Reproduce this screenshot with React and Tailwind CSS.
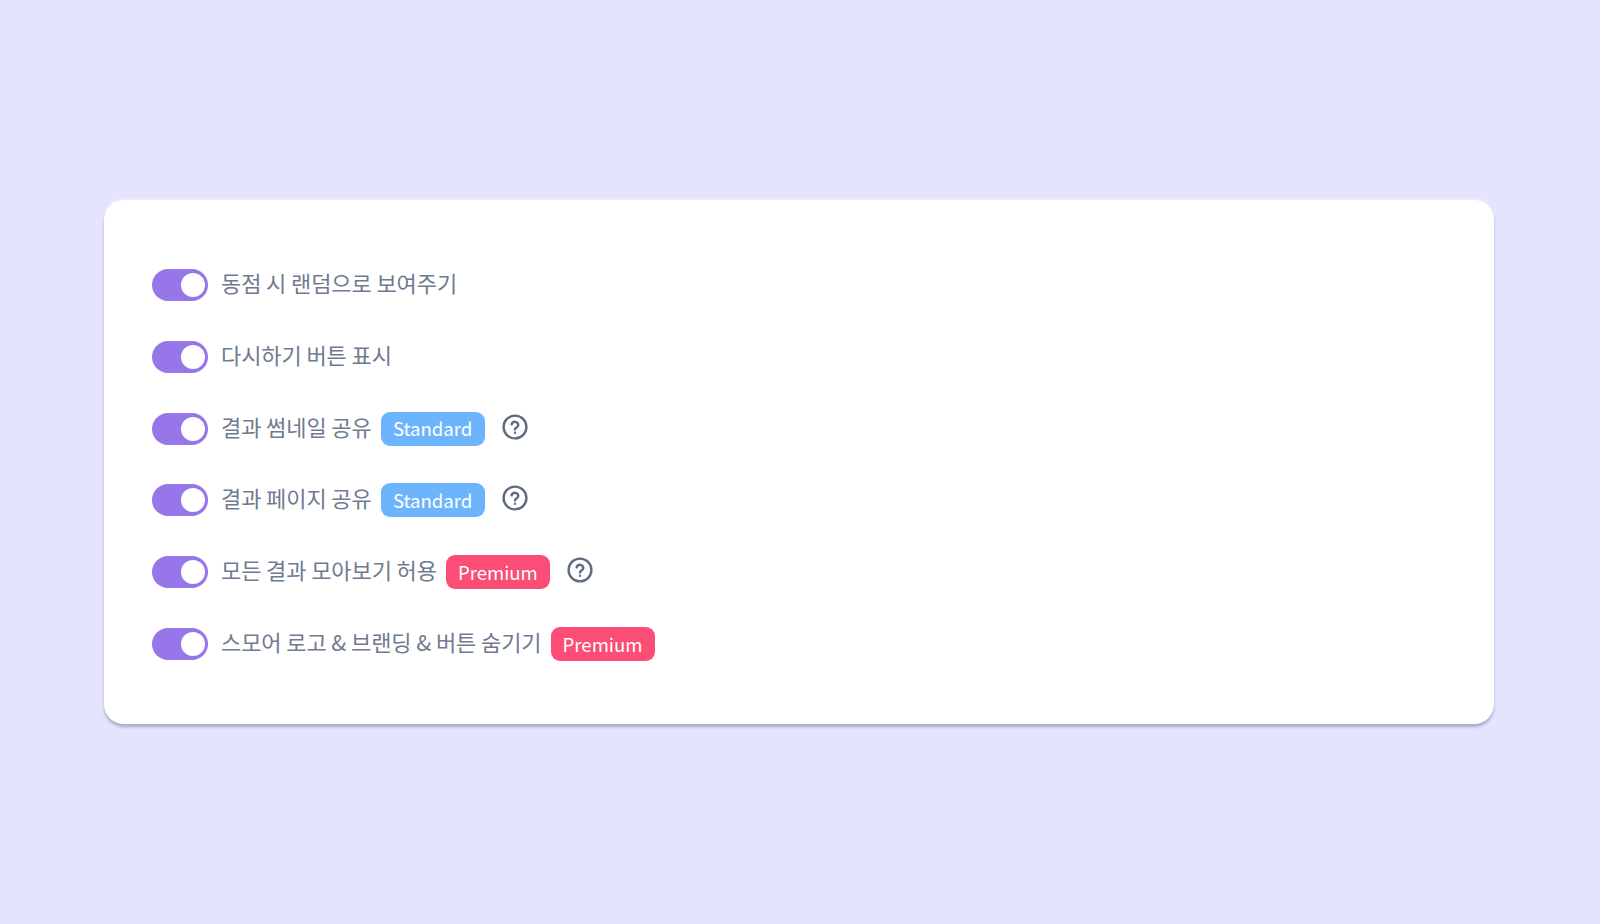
const Toggle = () => (
  <div className="flex h-[32px] w-[56px] shrink-0 items-center justify-end rounded-full bg-[#9776ea] pr-[3px]">
    <div className="h-[24px] w-[24px] rounded-full bg-white" />
  </div>
);

const Help = () => (
  <svg className="ml-[17px] mt-[-4px] h-[26px] w-[26px]" viewBox="0 0 26 26" fill="none" stroke="#5f6b80" strokeWidth="2.4" strokeLinecap="round" strokeLinejoin="round">
    <circle cx="13" cy="13" r="11.4" />
    <path d="M9.6 10.4a3.4 3.4 0 0 1 6.7.7c0 2.2-3.3 2.6-3.3 4.3" />
    <circle cx="13" cy="18.7" r="0.5" fill="#5f6b80" strokeWidth="1.4" />
  </svg>
);

const Badge = ({ type }) => (
  <span className={`ml-[9px] flex h-[34px] w-[104px] items-center justify-center rounded-[9px] text-[18.6px] leading-none text-white ${type === "Premium" ? "bg-[#fb4d75]" : "bg-[#6cb5fd]"}`}>
    {type}
  </span>
);

const rows = [
  { label: "동점 시 랜덤으로 보여주기" },
  { label: "다시하기 버튼 표시" },
  { label: "결과 썸네일 공유", badge: "Standard", help: true },
  { label: "결과 페이지 공유", badge: "Standard", help: true },
  { label: "모든 결과 모아보기 허용", badge: "Premium", help: true },
  { label: "스모어 로고 & 브랜딩 & 버튼 숨기기", badge: "Premium" },
];

export default function App() {
  return (
    <div className="min-h-[924px] bg-[#e4e4fe] pl-[104px] pr-[106px] pt-[200px] font-['Noto_Sans_CJK_KR','Noto_Sans',sans-serif]">
      <div className="flex h-[524px] flex-col gap-[39.8px] rounded-[20px] bg-white pl-[48px] pt-[69px] shadow-[0_3px_3px_rgba(90,90,130,0.4),0_-1px_3px_rgba(255,255,255,0.5)]">
        {rows.map((row) => (
          <div key={row.label} className="flex h-[32px] items-center">
            <Toggle />
            <span className="ml-[13px] mt-[-6px] text-[22px] leading-none tracking-[-0.1px] text-[#6f7a90]">{row.label}</span>
            {row.badge && <Badge type={row.badge} />}
            {row.help && <Help />}
          </div>
        ))}
      </div>
    </div>
  );
}
